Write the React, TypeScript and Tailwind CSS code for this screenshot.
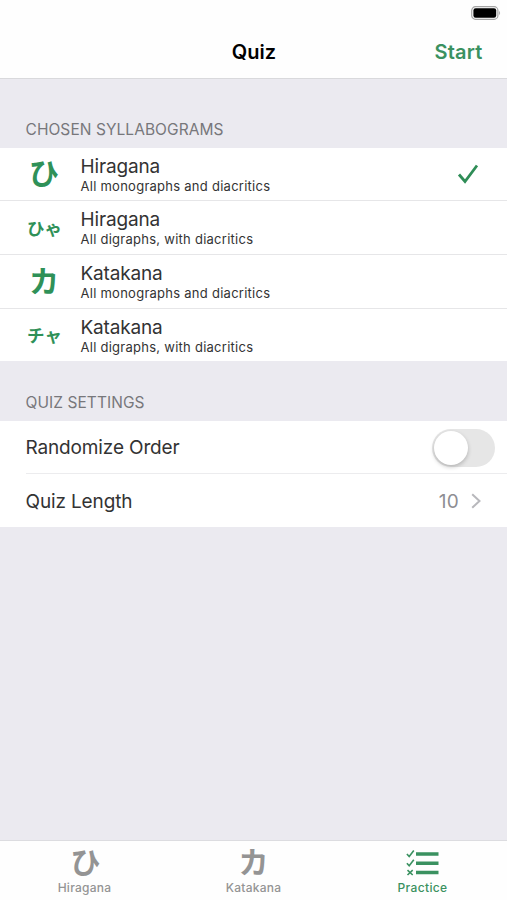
import clsx from 'clsx';

const syllabograms = [
    { glyph: 'ひ', title: 'Hiragana', detail: 'All monographs and diacritics', small: false, checked: true },
    { glyph: 'ひゃ', title: 'Hiragana', detail: 'All digraphs, with diacritics', small: true, checked: false },
    { glyph: 'カ', title: 'Katakana', detail: 'All monographs and diacritics', small: false, checked: false },
    { glyph: 'チャ', title: 'Katakana', detail: 'All digraphs, with diacritics', small: true, checked: false },
];

function Battery() {
    return (
        <svg width="30" height="14" viewBox="0 0 30 14" fill="none">
            <rect x="0.7" y="0.7" width="26.2" height="12.6" rx="3.8" stroke="#a5a5a5" strokeWidth="1.2" />
            <rect x="2.4" y="2.2" width="22.8" height="9.6" rx="2.2" fill="#000" />
            <path d="M28.2 5v4c1.2-.6 1.2-3.4 0-4Z" fill="#a5a5a5" />
        </svg>
    );
}

function ChecklistIcon() {
    return (
        <svg width="34" height="28" viewBox="0 0 34 28" fill="none" stroke="#3a9160">
            <path d="M10 5H32.5M10 14.2H32.5M10 23.5H32.5" strokeWidth="3.6" />
            <path d="M.9 5l2.3 2.5L7.8 1.6M.9 14.2l2.3 2.5 4.6-5.9M1.5 21.2l5.2 4.8M6.7 21.2L1.5 26" strokeWidth="1.6" />
        </svg>
    );
}

function SectionTitle({ children, className }: { children: string; className?: string }) {
    return (
        <h2 className={clsx('flex items-end pl-[25.5px] text-[15.5px] leading-5 tracking-[0.06px] text-[#77777b]', className)}>
            {children}
        </h2>
    );
}

export default function App() {
    return (
        <div className="flex h-[900px] w-[507px] flex-col overflow-hidden bg-[#ebeaf0] font-['Inter','Noto_Sans_CJK_JP',sans-serif] text-[#333]">
            {/* Status bar & navigation */}
            <header className="h-[79px] shrink-0 border-b border-[#d9d9dc] bg-[#fefefe]">
                <div className="flex h-[26px] justify-end pt-1.5 pr-[6px]">
                    <Battery />
                </div>
                <div className="grid h-[52px] grid-cols-3 items-center text-[20px] font-semibold">
                    <h1 className="col-start-2 pl-px text-center text-black">Quiz</h1>
                    <button className="pr-[24.5px] text-right tracking-[0.2px] text-[#3a9160]">Start</button>
                </div>
            </header>

            <main className="flex-1">
                <SectionTitle className="h-[69px] pb-2">CHOSEN SYLLABOGRAMS</SectionTitle>
                <ul className="bg-white">
                    {syllabograms.map((s, i) => (
                        <li
                            key={i}
                            className={clsx(
                                'flex items-center pr-[28px]',
                                i === 0 && 'h-[53px] border-b border-[#e6e6e8]',
                                (i === 1 || i === 2) && 'h-[54px] border-b border-[#e6e6e8]',
                                i === 3 && 'h-[52px]',
                            )}
                        >
                            <span
                                className={clsx(
                                    'ml-[20px] w-12 text-center font-bold leading-none whitespace-nowrap text-[#2f9158]',
                                    s.small ? 'pt-0.5 pl-px text-[17.5px]' : 'pb-0.5 text-[30px]',
                                )}
                            >
                                {s.glyph}
                            </span>
                            <div className="ml-[12.5px] flex-1 pt-[3px]">
                                <p className="text-[19px] leading-[20px] tracking-[-0.16px]">{s.title}</p>
                                <p className="text-[13px] leading-[18px] tracking-[0.26px]">{s.detail}</p>
                            </div>
                            {s.checked && (
                                <svg width="22" height="20" viewBox="0 0 22 20" fill="none">
                                    <path d="M2 10.5l6 7L20 1.5" stroke="#2f8d57" strokeWidth="2.8" />
                                </svg>
                            )}
                        </li>
                    ))}
                </ul>

                <SectionTitle className="h-[60px] pb-2">QUIZ SETTINGS</SectionTitle>
                <div className="bg-white pl-[25.5px] text-[19px] tracking-[-0.14px]">
                    <div className="flex h-[53px] items-center justify-between border-b border-[#ececee] pt-px pr-3">
                        <span className="pt-px">Randomize Order</span>
                        <span className="flex h-[38px] w-[63px] items-center rounded-full bg-[#e6e6e6] p-0.5">
                            <span className="size-[34px] rounded-full bg-white shadow-[0_2px_4px_rgba(0,0,0,0.22)]" />
                        </span>
                    </div>
                    <div className="flex h-[53px] items-center pr-[26px]">
                        <span className="flex-1 pt-1">Quiz Length</span>
                        <span className="pt-1 tracking-[0.3px] text-[#8e8e93]">10</span>
                        <svg className="ml-3" width="10" height="16" viewBox="0 0 10 16" fill="none">
                            <path d="M1.2 1.2L8.5 8l-7.3 6.8" stroke="#b8b8bc" strokeWidth="2" />
                        </svg>
                    </div>
                </div>
            </main>

            {/* Tab bar */}
            <nav className="grid h-[60px] shrink-0 grid-cols-3 border-t border-[#dcdce0] bg-[#fefefe] text-[12px] font-medium tracking-[0.25px] text-[#949494]">
                <div className="flex flex-col items-center">
                    <span className="mt-1.5 h-8 pl-0.5 text-[30px] leading-[30px] font-bold">ひ</span>
                    <span className="leading-[17px]">Hiragana</span>
                </div>
                <div className="flex flex-col items-center">
                    <span className="mt-1.5 h-8 text-[30px] leading-[30px] font-bold">カ</span>
                    <span className="leading-[17px]">Katakana</span>
                </div>
                <div className="flex flex-col items-center text-[#3a9160]">
                    <span className="mt-1.5 h-8 pt-0.5">
                        <ChecklistIcon />
                    </span>
                    <span className="leading-[17px] tracking-[0.35px]">Practice</span>
                </div>
            </nav>
        </div>
    );
}
